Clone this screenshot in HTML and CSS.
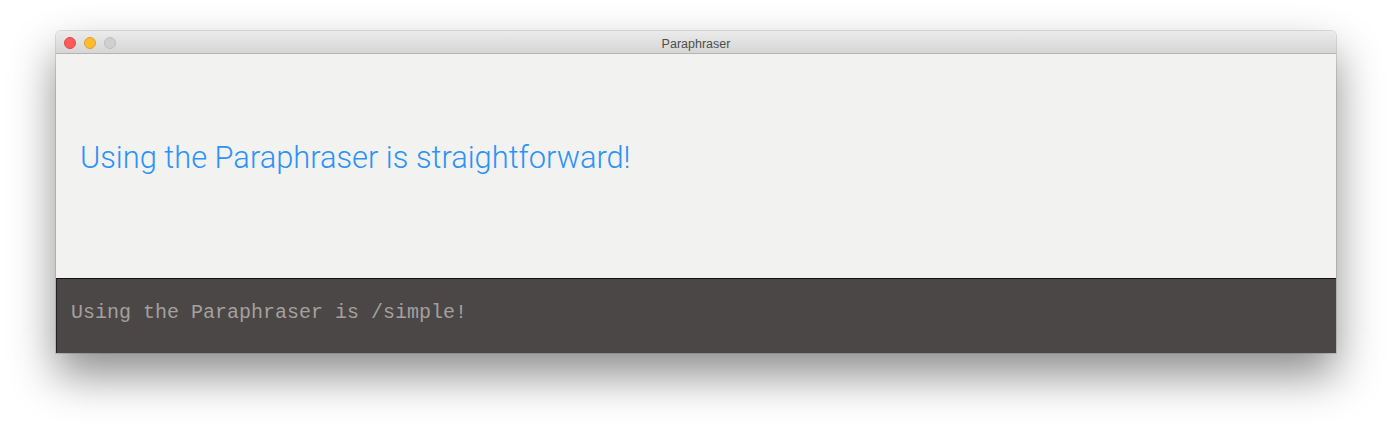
FILE: index.html
```html
<!DOCTYPE html>
<html>
<head>
<meta charset="utf-8">
<link rel="stylesheet" href="styles.css">
</head>
<body>
<div class="stage">
  <div class="window">
    <div class="titlebar">
      <div class="lights">
        <span class="light red"></span>
        <span class="light yellow"></span>
        <span class="light gray"></span>
      </div>
      <div class="title">Paraphraser</div>
    </div>
    <div class="output">
      <div class="result">Using the Paraphraser is straightforward!</div>
    </div>
    <div class="input">
      <div class="command">Using the Paraphraser is /simple!</div>
    </div>
  </div>
</div>
</body>
</html>
```

FILE: styles.css
```css
html, body {
  margin: 0;
  padding: 0;
  background: #ffffff;
}
.stage {
  padding: 31px 56px 81px 56px;
  height: 434px;
  box-sizing: border-box;
}
.window {
  width: 1280px;
  border-radius: 5px 5px 0 0;
  box-shadow: 0 22px 45px rgba(0, 0, 0, 0.45), 0 0 0 1px rgba(0, 0, 0, 0.12);
  overflow: hidden;
  display: flex;
  flex-direction: column;
}
.titlebar {
  height: 22px;
  background: linear-gradient(#ebebeb, #d6d6d6);
  border-bottom: 1px solid #b4b4b4;
  position: relative;
  display: flex;
  align-items: center;
  justify-content: center;
}
.lights {
  position: absolute;
  left: 8px;
  top: 6px;
  display: flex;
  gap: 8px;
}
.light {
  width: 12px;
  height: 12px;
  border-radius: 50%;
  box-sizing: border-box;
}
.red { background: #fc5b57; border: 1px solid #df4744; }
.yellow { background: #fdbc2e; border: 1px solid #de9f34; }
.gray { background: #d0d0d0; border: 1px solid #bdbdbd; }
.title {
  font-family: "Liberation Sans", Arial, sans-serif;
  font-size: 12.5px;
  color: #4d4d4d;
  margin-top: 3px;
}
.output {
  height: 224px;
  background: #f2f2f1;
  display: flex;
  align-items: center;
  padding: 0 24px;
}
.result {
  font-family: Roboto, "Liberation Sans", sans-serif;
  font-weight: 300;
  font-size: 30.8px;
  color: #2b93f7;
  margin-top: -18px;
}
.input {
  height: 74px;
  background: #4b4746;
  border-top: 1px solid #111;
  border-left: 1px solid #222;
  display: flex;
  align-items: center;
  padding: 0 14px;
}
.command {
  font-family: "Liberation Mono", "Courier New", monospace;
  font-size: 20px;
  color: #a3a09f;
  margin-top: -8px;
}
```
